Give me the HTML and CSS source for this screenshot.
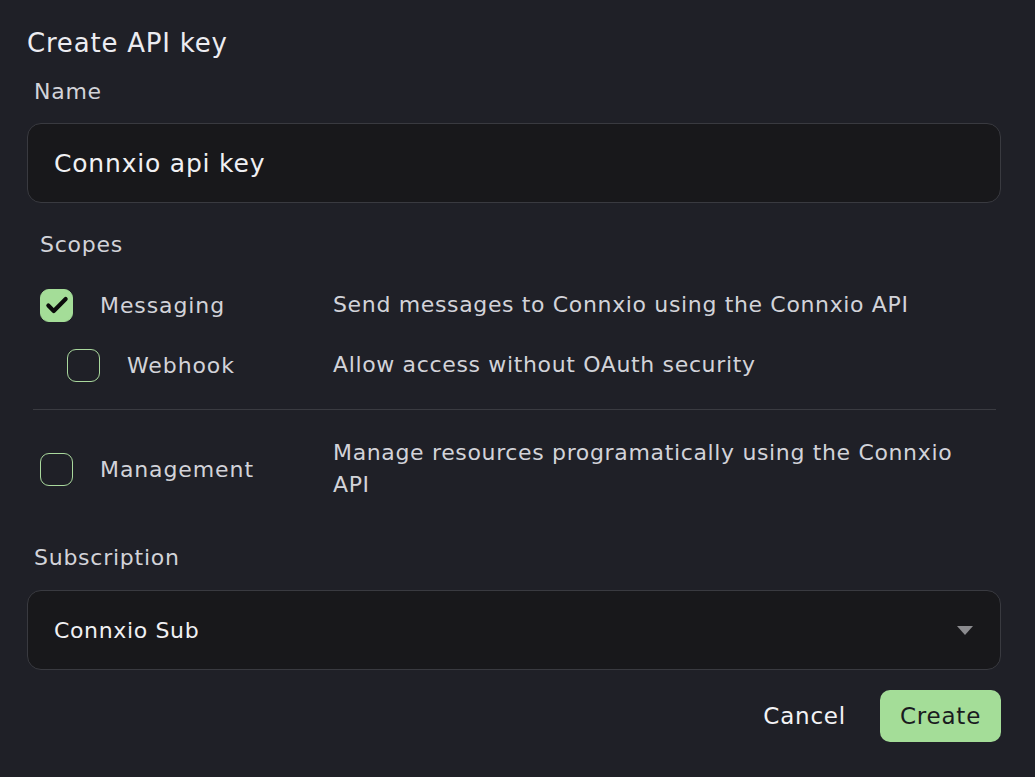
FILE: index.html
```html
<!DOCTYPE html>
<html lang="en">
<head>
<meta charset="utf-8">
<title>Create API key</title>
<link rel="stylesheet" href="styles.css">
</head>
<body>
<div class="dialog">
  <h1 class="title">Create API key</h1>
  <div class="label name-label">Name</div>
  <div class="field"><span class="field-text">Connxio api key</span></div>

  <div class="label scopes-label">Scopes</div>
  <div class="scopes">
    <div class="scope">
      <span class="box checked">
        <svg viewBox="0 0 24 24" width="26" height="26"><path d="M4 12.5l5 5 11-11" fill="none" stroke="#0b0b0b" stroke-width="3.8" stroke-linecap="round" stroke-linejoin="round"/></svg>
      </span>
      <span class="scope-name">Messaging</span>
      <span class="scope-desc">Send messages to Connxio using the Connxio API</span>
    </div>
    <div class="scope sub">
      <span class="box"></span>
      <span class="scope-name">Webhook</span>
      <span class="scope-desc">Allow access without OAuth security</span>
    </div>
    <div class="divider"></div>
    <div class="scope mgmt">
      <span class="box"></span>
      <span class="scope-name">Management</span>
      <span class="scope-desc">Manage resources programatically using the Connxio API</span>
    </div>
  </div>

  <div class="label sub-label">Subscription</div>
  <div class="field select"><span class="field-text small">Connxio Sub</span><span class="arrow"></span></div>

  <div class="actions">
    <button class="btn cancel">Cancel</button>
    <button class="btn create">Create</button>
  </div>
</div>
</body>
</html>
```

FILE: styles.css
```css
html, body {
  margin: 0;
  padding: 0;
  background: #1f2027;
  height: 100%;
}
body {
  font-family: "DejaVu Sans", "Open Sans", sans-serif;
  color: #e4e4ea;
  letter-spacing: 0.65px;
}
.dialog {
  padding: 27px 34px 0 27px;
}
.title {
  margin: 0;
  font-size: 26px;
  line-height: 32px;
  font-weight: 400;
  letter-spacing: 0.8px;
  color: #ececf1;
}
.label {
  font-size: 22px;
  line-height: 30px;
  letter-spacing: 0.75px;
  color: #d2d3d9;
}
.name-label {
  margin: 18px 0 0 7px;
}
.field {
  margin-top: 16px;
  height: 78px;
  border: 1px solid #393a40;
  border-radius: 14px;
  background: #18181b;
  display: flex;
  align-items: center;
  padding: 0 26px;
}
.field-text {
  font-size: 25px;
  letter-spacing: 0.8px;
  color: #f0f0f3;
}
.field-text.small {
  font-size: 22px;
  letter-spacing: 0.65px;
}
.scopes-label {
  margin: 27px 0 0 13px;
}
.scopes {
  margin-top: 15px;
}
.scope {
  display: flex;
  align-items: center;
  min-height: 60px;
  padding-left: 13px;
  font-size: 22px;
  color: #d2d3d9;
}
.box {
  flex: none;
  width: 31px;
  height: 31px;
  border: 1px solid #a9d89d;
  border-radius: 9px;
  margin-right: 27px;
  display: flex;
  align-items: center;
  justify-content: center;
}
.box.checked {
  background: #a4dd98;
  border-color: #a4dd98;
}
.scope-name {
  flex: none;
  width: 233px;
  letter-spacing: 0.9px;
}
.scope.sub {
  padding-left: 40px;
}
.scope.sub .scope-name {
  width: 206px;
}
.scope-desc {
  flex: 0 1 640px;
  line-height: 32px;
}
.divider {
  height: 1px;
  background: #3a3b41;
  margin: 14px 5px 27px 6px;
}
.scope.mgmt {
  min-height: 64px;
}
.sub-label {
  margin: 42px 0 0 7px;
}
.select {
  margin-top: 17px;
  justify-content: space-between;
}
.arrow {
  width: 0;
  height: 0;
  border-left: 8px solid transparent;
  border-right: 8px solid transparent;
  border-top: 9px solid #8b8b8f;
  margin-right: 1px;
}
.actions {
  margin-top: 20px;
  display: flex;
  justify-content: flex-end;
  align-items: center;
}
.btn {
  font-family: inherit;
  font-size: 23px;
  letter-spacing: 0.8px;
  border: none;
  cursor: pointer;
}
.cancel {
  background: transparent;
  color: #f3f3f5;
  padding: 0;
  margin-right: 34px;
}
.create {
  width: 121px;
  height: 52px;
  padding: 0;
  border-radius: 10px;
  background: #a4dd98;
  color: #1a1b1f;
}
```
